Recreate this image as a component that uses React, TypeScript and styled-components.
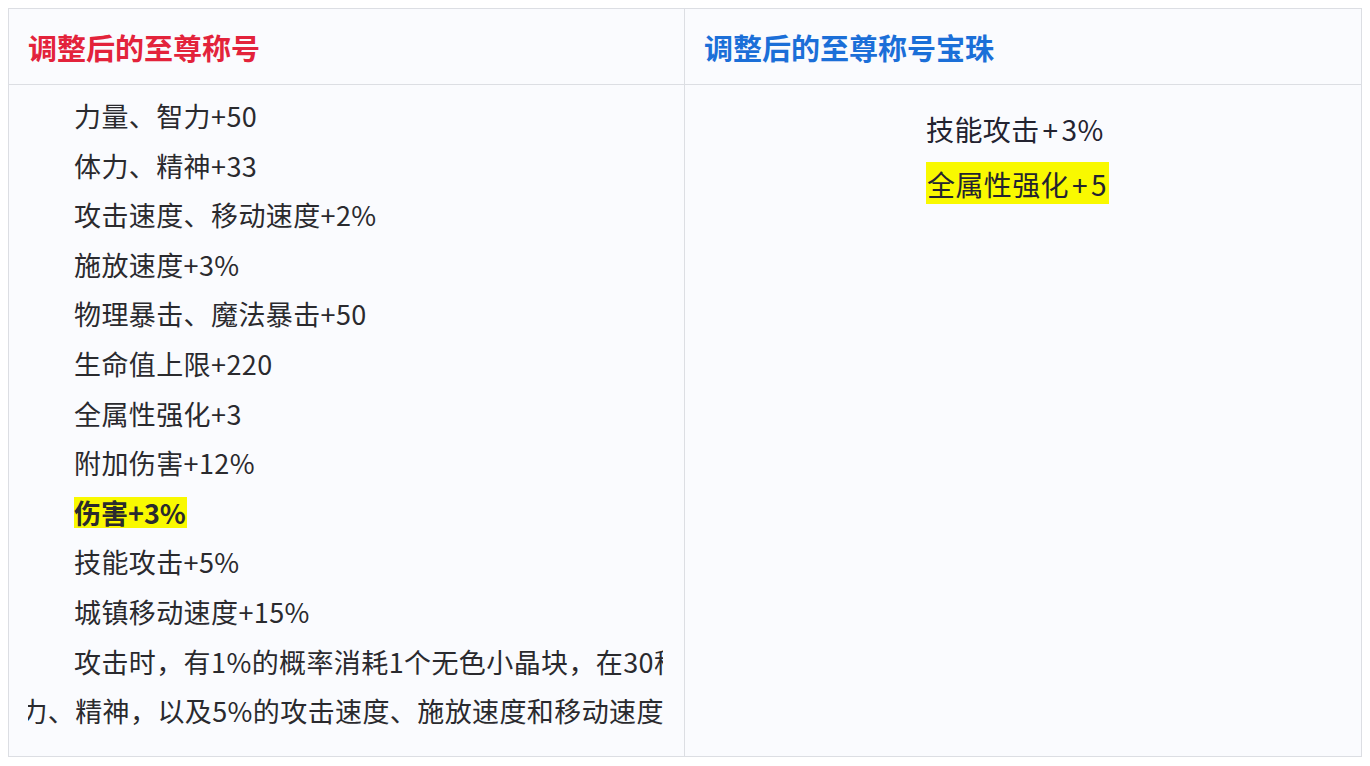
import React from "react";
import styled, { createGlobalStyle } from "styled-components";

const GlobalStyle = createGlobalStyle`
  html, body { margin: 0; padding: 0; background: #ffffff; }
  body { margin: 8px; font-family: "Noto Sans CJK SC", "Noto Sans", sans-serif; }
`;

const Table = styled.div`
  box-sizing: border-box;
  width: 1354px;
  height: 749px;
  display: grid;
  grid-template-columns: 676px 1fr;
  grid-template-rows: 76px 1fr;
  border: 1px solid #dcdee3;
  background: #fafbfe;
  box-shadow: 0 1px 1px rgba(0, 0, 0, 0.05);
`;

const HeadCell = styled.div<{ $last?: boolean }>`
  display: flex;
  align-items: center;
  padding: 0 19px;
  border-bottom: 1px solid #dcdee3;
  border-right: ${(p) => (p.$last ? "none" : "1px solid #dcdee3")};
`;

const HeadText = styled.span<{ $color: string }>`
  font-size: 29px;
  font-weight: 700;
  color: ${(p) => p.$color};
  line-height: 1;
  padding-top: 2px;
`;

const LeftBody = styled.div`
  border-right: 1px solid #dcdee3;
  padding: 6px 21px 0 19px;
  display: flex;
  flex-direction: column;
  min-width: 0;
`;

const Line = styled.div<{ $indent?: number }>`
  font-size: 27px;
  line-height: 49.6px;
  height: 49.6px;
  letter-spacing: 0.4px;
  color: #2a2a2e;
  white-space: nowrap;
  overflow: hidden;
  padding-left: ${(p) => (p.$indent ?? 46)}px;
`;

const Shifted = styled.span<{ $shift: number }>`
  display: inline-block;
  margin-left: ${(p) => -p.$shift}px;
`;

const Mark = styled.span`
  display: inline-block;
  background: #f9f900;
  font-weight: 700;
  letter-spacing: 0;
  line-height: 31px;
  padding-right: 1px;
`;

const RightBody = styled.div`
  padding: 17px 0 0 241px;
  display: flex;
  flex-direction: column;
  align-items: flex-start;
`;

const RightLine = styled.div`
  font-size: 28px;
  line-height: 55px;
  letter-spacing: 0.4px;
  color: #232330;
  white-space: nowrap;
`;

const RightMark = styled.span`
  background: #f9f900;
  padding: 2px 2px 0 1px;
`;

const Plus = styled.span`
  margin: 0 3px;
`;

const leftLines = [
  "力量、智力+50",
  "体力、精神+33",
  "攻击速度、移动速度+2%",
  "施放速度+3%",
  "物理暴击、魔法暴击+50",
  "生命值上限+220",
  "全属性强化+3",
  "附加伤害+12%",
];

export default function App() {
  return (
    <>
      <GlobalStyle />
      <Table>
        <HeadCell>
          <HeadText $color="#e3233b">调整后的至尊称号</HeadText>
        </HeadCell>
        <HeadCell $last>
          <HeadText $color="#1b6fd8">调整后的至尊称号宝珠</HeadText>
        </HeadCell>
        <LeftBody>
          {leftLines.map((t) => (
            <Line key={t}>{t}</Line>
          ))}
          <Line>
            <Mark>伤害+3%</Mark>
          </Line>
          <Line>技能攻击+5%</Line>
          <Line>城镇移动速度+15%</Line>
          <Line>攻击时，有1%的概率消耗1个无色小晶块，在30秒内增加</Line>
          <Line $indent={0}>
            <Shifted $shift={35}>体力、精神，以及5%的攻击速度、施放速度和移动速度</Shifted>
          </Line>
        </LeftBody>
        <RightBody>
          <RightLine>
            技能攻击<Plus>+</Plus>3%
          </RightLine>
          <RightLine>
            <RightMark>
              全属性强化<Plus>+</Plus>5
            </RightMark>
          </RightLine>
        </RightBody>
      </Table>
    </>
  );
}
